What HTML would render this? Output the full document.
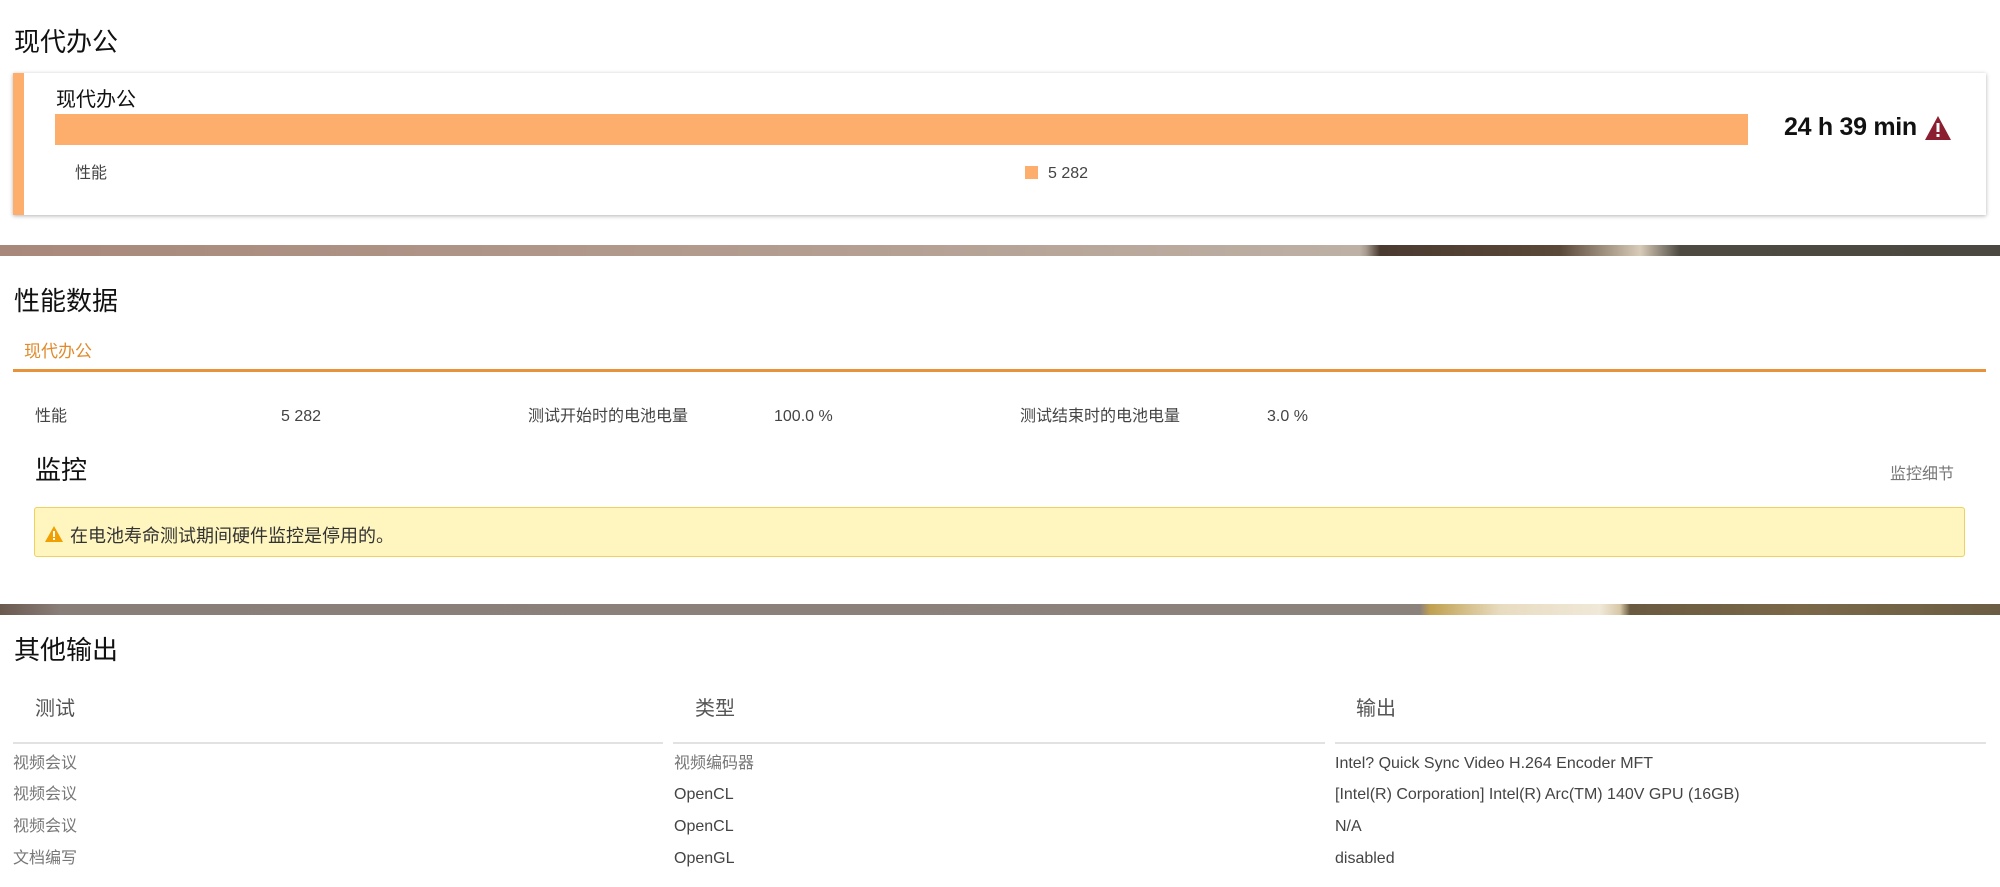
<!DOCTYPE html>
<html><head><meta charset="utf-8"><style>
*{margin:0;padding:0;box-sizing:border-box}
body{width:2000px;height:887px;overflow:hidden;background:#fff;font-family:"Liberation Sans","Noto Sans CJK SC",sans-serif;color:#333;position:relative}
.a{position:absolute;white-space:nowrap}
h2{position:absolute;font-weight:normal;font-size:26px;color:#111;font-family:"Noto Sans CJK SC",sans-serif;line-height:1}
.t{font-size:16px;color:#444;line-height:1}
</style></head><body>
<h2 style="left:14px;top:28px">现代办公</h2>
<div class="a" style="left:13px;top:73px;width:1973px;height:142px;background:#fff;box-shadow:0 1px 4px rgba(0,0,0,.3);border-left:11px solid #feae6c"></div>
<div class="a" style="left:56px;top:83px;font-size:20px;color:#111">现代办公</div>
<div class="a" style="left:55px;top:114px;width:1693px;height:31px;background:#feae6c"></div>
<div class="a" style="left:1784px;top:113px;font-size:25px;font-weight:bold;color:#111;letter-spacing:-0.3px">24 h 39 min</div>
<svg class="a" style="left:1925px;top:116px" width="26" height="24" viewBox="0 0 26 24"><path d="M13 0L26 24H0Z" fill="#8b1e2f"/><rect x="11.5" y="7" width="3" height="9" fill="#fff"/><rect x="11.5" y="18" width="3" height="3" fill="#fff"/></svg>
<div class="a t" style="left:75px;top:166px">性能</div>
<div class="a" style="left:1025px;top:166px;width:13px;height:13px;background:#feae6c"></div>
<div class="a t" style="left:1048px;top:166px">5 282</div>
<div class="a" style="left:0;top:245px;width:2000px;height:11px;background:linear-gradient(90deg,#a8887a 0,#b39d90 40%,#bdb0a5 68%,#a89c90 68.3%,#4a3a30 69%,#5a4838 78%,#d8cbb8 82%,#4e4a42 84%,#4a4840 100%)"></div>
<h2 style="left:14px;top:287px">性能数据</h2>
<div class="a" style="left:24px;top:337px;font-size:17px;color:#e08a2c">现代办公</div>
<div class="a" style="left:13px;top:369px;width:1973px;height:3px;background:#e8923a"></div>
<div class="a t" style="left:35px;top:409px">性能</div>
<div class="a t" style="left:281px;top:409px">5 282</div>
<div class="a t" style="left:528px;top:409px">测试开始时的电池电量</div>
<div class="a t" style="left:774px;top:409px">100.0 %</div>
<div class="a t" style="left:1020px;top:409px">测试结束时的电池电量</div>
<div class="a t" style="left:1267px;top:409px">3.0 %</div>
<h2 style="left:35px;top:456px">监控</h2>
<div class="a t" style="left:1890px;top:467px;color:#777">监控细节</div>
<div class="a" style="left:34px;top:507px;width:1931px;height:50px;background:#fef5bf;border:1px solid #f0d060;border-radius:3px"></div>
<svg class="a" style="left:45px;top:526px" width="18" height="16" viewBox="0 0 18 16"><path d="M9 0L18 16H0Z" fill="#f0a000"/><rect x="8" y="5" width="2" height="6" fill="#fff"/><rect x="8" y="12" width="2" height="2" fill="#fff"/></svg>
<div class="a" style="left:70px;top:522px;font-size:18px;color:#333">在电池寿命测试期间硬件监控是停用的。</div>
<div class="a" style="left:0;top:604px;width:2000px;height:11px;background:linear-gradient(90deg,#6a5a50 0,#8a7e78 3%,#8c827c 71%,#c0a050 71.5%,#e8dcc0 75%,#f0e8d8 80%,#d8c8a8 81%,#6a5a40 81.5%,#7a6848 90%,#6c5e44 100%)"></div>
<h2 style="left:14px;top:636px">其他输出</h2>
<div class="a" style="left:35px;top:692px;font-size:20px;color:#555">测试</div>
<div class="a" style="left:695px;top:692px;font-size:20px;color:#555">类型</div>
<div class="a" style="left:1356px;top:692px;font-size:20px;color:#555">输出</div>
<div class="a" style="left:13px;top:742px;width:650px;height:2px;background:#e2e2e2"></div>
<div class="a" style="left:673px;top:742px;width:652px;height:2px;background:#e2e2e2"></div>
<div class="a" style="left:1335px;top:742px;width:651px;height:2px;background:#e2e2e2"></div>
<div class="a t" style="left:13px;top:756px;color:#777">视频会议</div>
<div class="a t" style="left:674px;top:756px;color:#777">视频编码器</div>
<div class="a t" style="left:1335px;top:756px">Intel? Quick Sync Video H.264 Encoder MFT</div>
<div class="a t" style="left:13px;top:787px;color:#777">视频会议</div>
<div class="a t" style="left:674px;top:787px">OpenCL</div>
<div class="a t" style="left:1335px;top:787px">[Intel(R) Corporation] Intel(R) Arc(TM) 140V GPU (16GB)</div>
<div class="a t" style="left:13px;top:819px;color:#777">视频会议</div>
<div class="a t" style="left:674px;top:819px">OpenCL</div>
<div class="a t" style="left:1335px;top:819px">N/A</div>
<div class="a t" style="left:13px;top:851px;color:#777">文档编写</div>
<div class="a t" style="left:674px;top:851px">OpenGL</div>
<div class="a t" style="left:1335px;top:851px">disabled</div>
</body></html>
